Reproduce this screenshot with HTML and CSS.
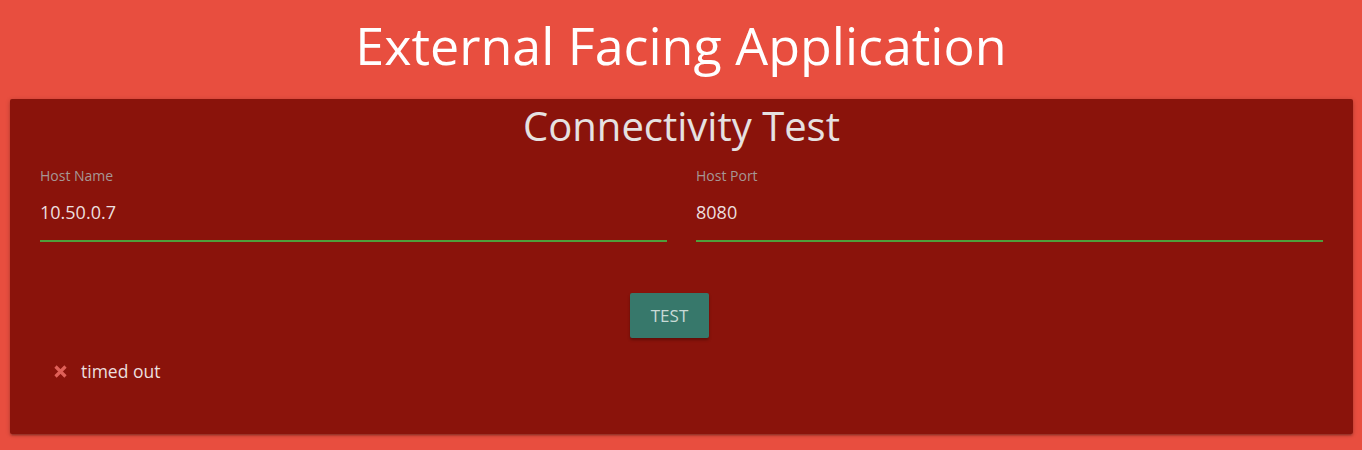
FILE: index.html
```html
<!DOCTYPE html>
<html>
<head>
<meta charset="utf-8">
<link rel="stylesheet" href="styles.css">
</head>
<body>
<h1 class="title">External Facing Application</h1>
<div class="card">
  <h2 class="card-title">Connectivity Test</h2>
  <div class="fields">
    <div class="field">
      <label class="label">Host Name</label>
      <div class="input">10.50.0.7</div>
    </div>
    <div class="field">
      <label class="label">Host Port</label>
      <div class="input">8080</div>
    </div>
  </div>
  <div class="actions">
    <button class="btn">TEST</button>
  </div>
  <div class="result">
    <svg class="x-icon" width="13" height="13" viewBox="0 0 13 13"><path d="M1.5 1.5 L11.5 11.5 M11.5 1.5 L1.5 11.5" stroke="#df6058" stroke-width="3.2" stroke-linecap="butt"/></svg>
    <span>timed out</span>
  </div>
</div>
</body>
</html>
```
FILE: styles.css
```css
html, body {
  margin: 0;
  padding: 0;
  background: #e84e3f;
  font-family: "Open Sans", "Noto Sans", sans-serif;
  height: 450px;
  overflow: hidden;
}
.title {
  margin: 0;
  padding-top: 7px;
  height: 99px;
  box-sizing: border-box;
  text-align: center;
  color: #ffffff;
  font-weight: 400;
  font-size: 52px;
  line-height: 76px;
}
.card {
  margin: 0 9px 0 10px;
  height: 335px;
  box-sizing: border-box;
  background: #8a130b;
  border-radius: 2px;
  box-shadow: 0 2px 2px rgba(0,0,0,0.14), 0 3px 1px -2px rgba(0,0,0,0.12), 0 1px 5px rgba(0,0,0,0.2);
  padding: 0 30px;
}
.card-title {
  margin: 0;
  text-align: center;
  color: #e6e1e1;
  font-weight: 400;
  font-size: 40px;
  line-height: 54px;
}
.fields {
  display: flex;
  gap: 29px;
  margin-top: 13px;
}
.field {
  flex: 1;
}
.label {
  display: block;
  color: #a69795;
  font-size: 14px;
  line-height: 20px;
}
.input {
  color: #ecdfdf;
  font-size: 18px;
  line-height: 24px;
  padding-top: 14px;
  height: 56px;
  box-sizing: border-box;
  border-bottom: 2px solid #4f9e3b;
}
.actions {
  display: flex;
  justify-content: center;
  margin-top: 51px;
  padding-right: 24px;
}
.btn {
  width: 79px;
  height: 45px;
  border: none;
  border-radius: 2px;
  background: #37786b;
  color: #c8dad6;
  font-family: inherit;
  font-size: 17px;
  box-shadow: 0 2px 3px rgba(0,0,0,0.3);
}
.result {
  display: flex;
  align-items: center;
  gap: 14px;
  margin-top: 21px;
  padding-left: 14px;
  color: #ecdfdf;
  font-size: 17.5px;
  line-height: 24px;
}
```
